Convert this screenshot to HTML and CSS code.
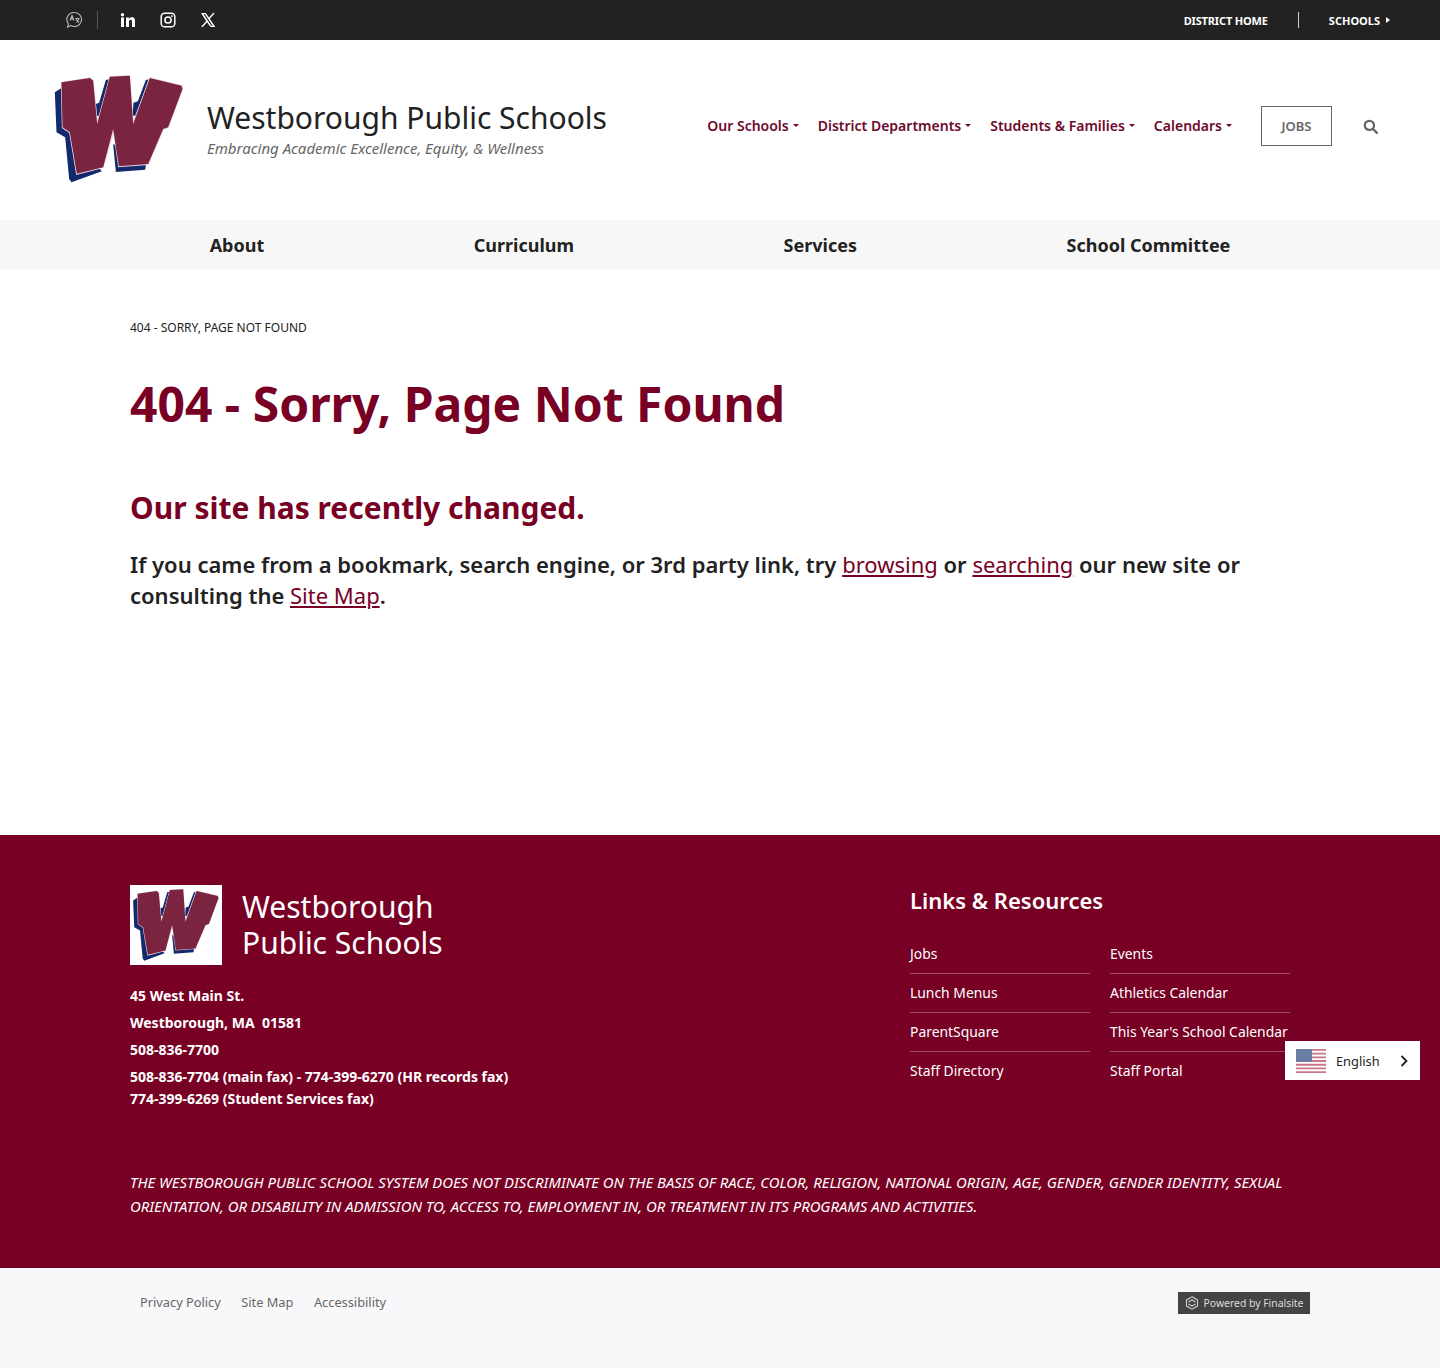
FILE: index.html
```html
<!DOCTYPE html>
<html lang="en">
<head>
    <meta charset="UTF-8">
    <meta name="viewport" content="width=device-width, initial-scale=1.0">
    <title>404 - Sorry, Page Not Found - Westborough Public Schools</title>
    <link rel="stylesheet" href="styles.css">
</head>
<body>
    <svg class="defs" width="0" height="0">
        <symbol id="logo-w" viewBox="160 220 395 330">
            <path fill="#12296b" d="M165 275 L185 262 L232 500 L300 505 L306 512 L215 545 L208 535 L196 410 L170 395 Z"/>
            <path fill="#12296b" d="M340 430 L425 480 L438 494 L436 507 L348 514 Z"/>
            <path fill="#12296b" d="M318 238 L328 236 L298 345 L288 345 L288 310 L298 306 Z"/>
            <path fill="#12296b" d="M438 238 L446 236 L408 345 L398 345 L401 306 L414 302 Z"/>
            <path fill="#ead7dd" d="M183 244 L272 230 L282 238 L293 358 L329 226 L391 223 L401 358 L450 230 L547 253 L550 265 L506 382 L492 387 L446 493 L355 500 L341 400 L311 502 L229 523 L208 397 L186 382 Z"/>
            <path fill="#7a2440" d="M185 245 L270 232 L280 240 L292 370 L330 228 L390 225 L400 370 L450 232 L545 255 L548 265 L505 380 L490 385 L445 490 L357 497 L340 385 L310 500 L231 519 L210 395 L188 380 Z"/>
        </symbol>
    </svg>

    <div class="topbar">
        <div class="topbar-social">
            <a class="topbar-translate" href="#">
                <svg width="18" height="18" viewBox="0 0 18 18" fill="none" stroke="#bbb" stroke-width="1.100">
                    <path d="M9.500 1.500a7 7 0 1 1-3.600 13l-3.400 1.600 1-3.200a7 7 0 0 1 6-11.400z"/>
                    <path d="M5 9.500l2-5 2 5M5.700 8h2.600M10.500 7.500h4M11 11.500l3-3.500M11 8.500l3 3"/>
                </svg>
            </a>
            <a href="#">
                <svg width="16" height="16" viewBox="0 0 16 16" fill="#fff">
                    <rect x="1" y="5.500" width="3" height="9.500"/>
                    <circle cx="2.500" cy="2.700" r="1.700"/>
                    <path d="M6 5.500h2.900v1.400c.5-.9 1.600-1.600 3-1.600 2.700 0 3.100 1.800 3.100 4.200V15h-3v-4.900c0-1.200-.1-2.300-1.400-2.300S9 8.800 9 10V15H6z"/>
                </svg>
            </a>
            <a href="#">
                <svg width="16" height="16" viewBox="0 0 16 16" fill="none" stroke="#fff" stroke-width="1.500">
                    <rect x="1.200" y="1.200" width="13.600" height="13.600" rx="3.400"/>
                    <circle cx="8" cy="8" r="3.100"/>
                    <circle cx="11.900" cy="4.100" r=".5" fill="#fff" stroke-width="1"/>
                </svg>
            </a>
            <a href="#">
                <svg width="16" height="16" viewBox="0 0 16 16" fill="#fff">
                    <path d="M1 1h4.700l3.300 4.500L13 1h1.800L9.800 6.700 15.300 15h-4.700L7 10.200 2.800 15H1l5.200-6z M3.600 2.300l7.700 11.400h1.400L5 2.300z"/>
                </svg>
            </a>
        </div>
        <div class="topbar-links">
            <a href="#">District Home</a>
            <a class="topbar-schools" href="#">Schools</a>
        </div>
    </div>

    <header class="site-header">
        <a class="brand" href="#">
            <svg class="brand-logo"><use href="#logo-w"/></svg>
            <div class="brand-text">
                <div class="brand-name">Westborough Public Schools</div>
                <div class="brand-tagline">Embracing Academic Excellence, Equity, &amp; Wellness</div>
            </div>
        </a>
        <nav class="header-nav">
            <a class="has-caret" href="#">Our Schools</a>
            <a class="has-caret" href="#">District Departments</a>
            <a class="has-caret" href="#">Students &amp; Families</a>
            <a class="has-caret" href="#">Calendars</a>
            <a class="btn-jobs" href="#">Jobs</a>
            <a class="search-link" href="#">
                <svg width="15" height="15" viewBox="0 0 16 16" fill="none" stroke="#666" stroke-width="2.400">
                    <circle cx="6.800" cy="6.800" r="4.900"/>
                    <path d="M10.500 10.500l4.300 4.300" stroke-linecap="round"/>
                </svg>
            </a>
        </nav>
    </header>

    <nav class="main-nav">
        <a href="#">About</a>
        <a href="#">Curriculum</a>
        <a href="#">Services</a>
        <a href="#">School Committee</a>
    </nav>

    <main class="content">
        <div class="breadcrumb">404 - Sorry, Page Not Found</div>
        <h1>404 - Sorry, Page Not Found</h1>
        <h2>Our site has recently changed.</h2>
        <p>If you came from a bookmark, search engine, or 3rd party link, try <a href="#">browsing</a> or <a href="#">searching</a> our new site or consulting the <a href="#">Site Map</a>.</p>
    </main>

    <footer class="site-footer">
        <div class="footer-top">
            <div class="footer-info">
                <div class="footer-brand">
                    <div class="footer-logo"><svg><use href="#logo-w"/></svg></div>
                    <div class="footer-name">Westborough<br>Public Schools</div>
                </div>
                <div class="footer-line">45 West Main St.</div>
                <div class="footer-line">Westborough, MA&nbsp; 01581</div>
                <div class="footer-line">508-836-7700</div>
                <div class="footer-fax">508-836-7704 (main fax) - 774-399-6270 (HR records fax)<br>774-399-6269 (Student Services fax)</div>
            </div>
            <div class="footer-links">
                <h3>Links &amp; Resources</h3>
                <div class="links-grid">
                    <a href="#">Jobs</a>
                    <a href="#">Events</a>
                    <a href="#">Lunch Menus</a>
                    <a href="#">Athletics Calendar</a>
                    <a href="#">ParentSquare</a>
                    <a href="#">This Year's School Calendar</a>
                    <a href="#">Staff Directory</a>
                    <a href="#">Staff Portal</a>
                </div>
            </div>
        </div>
        <p class="footer-notice">The Westborough Public School System does not discriminate on the basis of race, color, religion, national origin, age, gender, gender identity, sexual orientation, or disability in admission to, access to, employment in, or treatment in its programs and activities.</p>
    </footer>

    <div class="bottom-bar">
        <div class="bottom-links">
            <a href="#">Privacy Policy</a>
            <a href="#">Site Map</a>
            <a href="#">Accessibility</a>
        </div>
        <a class="powered" href="#">
            <svg width="14" height="14" viewBox="0 0 14 14" fill="none" stroke="#ccc" stroke-width="1.100">
                <path d="M7 .8l5.500 3.100v6.200L7 13.200 1.500 10.100V3.900z"/>
                <path d="M3.500 6L7 4l3.500 2M3.500 8L7 10l3.500-2"/>
            </svg>
            Powered by Finalsite
        </a>
    </div>

    <div class="lang-widget">
        <svg class="lang-flag" width="30" height="24" viewBox="0 0 30 24">
            <rect width="30" height="24" fill="#fff"/>
            <path stroke="#c4687a" stroke-width="1.850" d="M0 .9h30M0 4.600h30M0 8.300h30M0 12h30M0 15.700h30M0 19.400h30M0 23.100h30"/>
            <rect width="16" height="12.900" fill="#5a6f9c"/>
        </svg>
        <span>English</span>
        <svg class="lang-arrow" width="8" height="12" viewBox="0 0 8 12" fill="none" stroke="#222" stroke-width="1.800">
            <path d="M1.500 1l5 5-5 5"/>
        </svg>
    </div>
</body>
</html>
```

FILE: styles.css
```css
* {
    margin: 0;
    padding: 0;
    box-sizing: border-box;
}

:root {
    --maroon: #780024;
    --dark: #222222;
}

body {
    font-family: "Noto Sans", "Open Sans", sans-serif;
    color: var(--dark);
    background: #fff;
    position: relative;
    min-height: 1368px;
}

a {
    color: inherit;
    text-decoration: none;
}

.defs {
    position: absolute;
}

.topbar {
    height: 40px;
    background: var(--dark);
    display: flex;
    justify-content: space-between;
    align-items: center;
    padding: 0 50px 0 65px;
}

.topbar-social {
    display: flex;
    align-items: center;
    gap: 24px;
}

.topbar-social a {
    display: flex;
}

.topbar-translate {
    padding-right: 14px;
    margin-right: -2px;
    border-right: 1px solid #555;
}

.topbar-links {
    display: flex;
    align-items: center;
    font-size: 11px;
    font-weight: 700;
    text-transform: uppercase;
    color: #fff;
}

.topbar-links a {
    line-height: 15px;
    padding-top: 1px;
}

.topbar-links a:first-child {
    padding-right: 30px;
    border-right: 1px solid #ccc;
    letter-spacing: -0.15px;
}

.topbar-schools {
    padding-left: 30px;
    display: flex;
    align-items: center;
    gap: 6px;
}

.topbar-schools::after {
    content: "";
    border-left: 4px solid #fff;
    border-top: 3px solid transparent;
    border-bottom: 3px solid transparent;
    margin-top: -2px;
}

.site-header {
    height: 180px;
    display: flex;
    justify-content: space-between;
    align-items: center;
    padding: 0 62px 0 53px;
}

.brand {
    display: flex;
    align-items: center;
    gap: 22px;
}

.brand-logo {
    width: 132px;
    height: 110px;
    margin-top: -2px;
}

.brand-text {
    margin-bottom: 4px;
}

.brand-name {
    font-size: 30px;
    line-height: 40px;
}

.brand-tagline {
    font-size: 15px;
    line-height: 20px;
    font-style: italic;
    color: #666;
}

.header-nav {
    display: flex;
    align-items: center;
    font-size: 14px;
    font-weight: 600;
    color: #6d0a2c;
    margin-top: -9px;
}

.has-caret {
    margin-right: 19px;
    display: flex;
    align-items: center;
    gap: 4px;
}

.has-caret::after {
    content: "";
    border-top: 3px solid currentColor;
    border-left: 3px solid transparent;
    border-right: 3px solid transparent;
}

.btn-jobs {
    width: 71px;
    height: 40px;
    margin-left: 10px;
    margin-right: 31px;
    border: 1px solid #666;
    color: #666;
    font-size: 13px;
    text-transform: uppercase;
    display: flex;
    align-items: center;
    justify-content: center;
}

.search-link {
    display: flex;
    margin-top: 1px;
}

.main-nav {
    height: 50px;
    background: #f7f7f7;
    display: flex;
    justify-content: center;
    align-items: center;
    gap: 209.500px;
    font-size: 18px;
    font-weight: 700;
}

.content {
    height: 565px;
    padding: 49px 130px 0;
}

.breadcrumb {
    font-size: 12px;
    line-height: 18px;
    text-transform: uppercase;
}

h1 {
    font-size: 48px;
    line-height: 64px;
    font-weight: 700;
    color: var(--maroon);
    margin-top: 35px;
}

h2 {
    font-size: 30px;
    line-height: 40px;
    font-weight: 700;
    color: var(--maroon);
    margin-top: 52px;
}

.content p {
    font-size: 22px;
    line-height: 31px;
    font-weight: 600;
    margin-top: 21px;
}

.content p a {
    color: var(--maroon);
    font-weight: 400;
    text-decoration: underline;
}

.site-footer {
    height: 433px;
    background: var(--maroon);
    color: #fff;
    padding: 50px 130px 0;
}

.footer-top {
    display: flex;
    justify-content: space-between;
    height: 270px;
}

.footer-brand {
    display: flex;
    align-items: center;
    gap: 20px;
    margin-bottom: 17px;
}

.footer-logo {
    width: 92px;
    height: 80px;
    background: #fff;
    display: flex;
    align-items: center;
    justify-content: center;
}

.footer-logo svg {
    width: 88px;
    height: 74px;
}

.footer-name {
    font-size: 30px;
    line-height: 36px;
}

.footer-line {
    font-size: 14px;
    line-height: 27px;
    font-weight: 700;
}

.footer-fax {
    font-size: 14px;
    line-height: 22px;
    font-weight: 700;
    margin-top: 3px;
}

.footer-links {
    width: 380px;
    margin-right: 20px;
}

.footer-links h3 {
    font-size: 22px;
    line-height: 30px;
    font-weight: 600;
}

.links-grid {
    display: grid;
    grid-template-columns: 180px 180px;
    column-gap: 20px;
    margin-top: 20px;
    font-size: 13.900px;
}

.links-grid a {
    height: 39px;
    line-height: 38px;
    border-bottom: 1px solid #a2506a;
    white-space: nowrap;
}

.links-grid a:nth-last-child(-n+2) {
    border-bottom: none;
}

.footer-notice {
    font-size: 14.880px;
    line-height: 24px;
    font-style: italic;
    text-transform: uppercase;
    margin-top: 15px;
}

.bottom-bar {
    height: 100px;
    background: #f8f8fa;
    display: flex;
    justify-content: space-between;
    align-items: flex-start;
    padding: 24px 130px 0 140px;
}

.bottom-links {
    display: flex;
    gap: 20.500px;
    font-size: 12.800px;
    line-height: 20px;
    color: #666;
}

.powered {
    width: 132px;
    height: 22px;
    background: #444;
    color: #ddd;
    font-size: 10.400px;
    display: flex;
    align-items: center;
    justify-content: center;
    gap: 5px;
}

.lang-widget {
    position: absolute;
    left: 1285px;
    top: 1041px;
    width: 135px;
    height: 39px;
    background: #fff;
    display: flex;
    align-items: center;
    padding-left: 11px;
    font-size: 12.800px;
}

.lang-flag {
    margin-right: 10px;
    opacity: .9;
}

.lang-arrow {
    margin-left: 20px;
}
```
